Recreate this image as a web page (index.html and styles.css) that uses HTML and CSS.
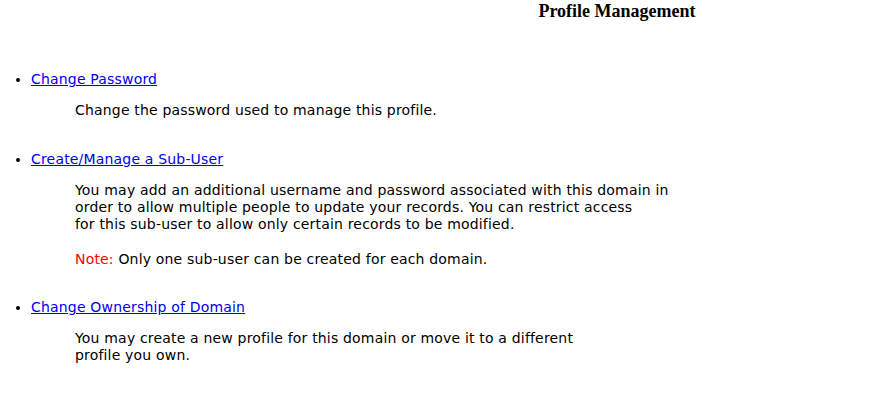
FILE: index.html
```html
<!DOCTYPE html>
<html>
<head>
<meta charset="utf-8">
<title>Profile Management</title>
<link rel="stylesheet" href="styles.css">
</head>
<body>
<div class="header">
  <h1 class="title">Profile Management</h1>
</div>
<ul class="options">
  <li class="option">
    <a class="option-link" href="#">Change Password</a>
    <p class="desc">Change the password used to manage this profile.</p>
  </li>
  <li class="option">
    <a class="option-link" href="#">Create/Manage a Sub-User</a>
    <p class="desc">You may add an additional username and password associated with this domain in<br>order to allow multiple people to update your records. You can restrict access<br>for this sub-user to allow only certain records to be modified.</p>
    <p class="desc note-line"><span class="note">Note:</span> Only one sub-user can be created for each domain.</p>
  </li>
  <li class="option">
    <a class="option-link" href="#">Change Ownership of Domain</a>
    <p class="desc">You may create a new profile for this domain or move it to a different<br>profile you own.</p>
  </li>
</ul>
</body>
</html>
```
FILE: styles.css
```css
html, body {
  margin: 0;
  padding: 0;
  background: #ffffff;
}
body {
  font-family: "DejaVu Sans", Verdana, sans-serif;
  font-size: 14px;
  letter-spacing: 0.18px;
  line-height: 17px;
  color: #000000;
}
.header {
  display: flex;
  justify-content: center;
  padding-left: 346px;
  padding-top: 1px;
}
.title {
  margin: 0;
  font-family: "Liberation Serif", "Times New Roman", serif;
  font-size: 18px;
  letter-spacing: 0;
  line-height: 20px;
  font-weight: bold;
}
.options {
  margin: 50px 0 0 0;
  padding-left: 31px;
}
.option {
  margin-bottom: 31px;
}
.option:first-child {
  margin-bottom: 32px;
}
.option-link {
  color: #0000ee;
  text-decoration: underline;
}
.desc {
  margin: 14px 0 0 44px;
}
.note-line {
  margin-top: 18px;
}
.note {
  color: #ff0000;
}
```
